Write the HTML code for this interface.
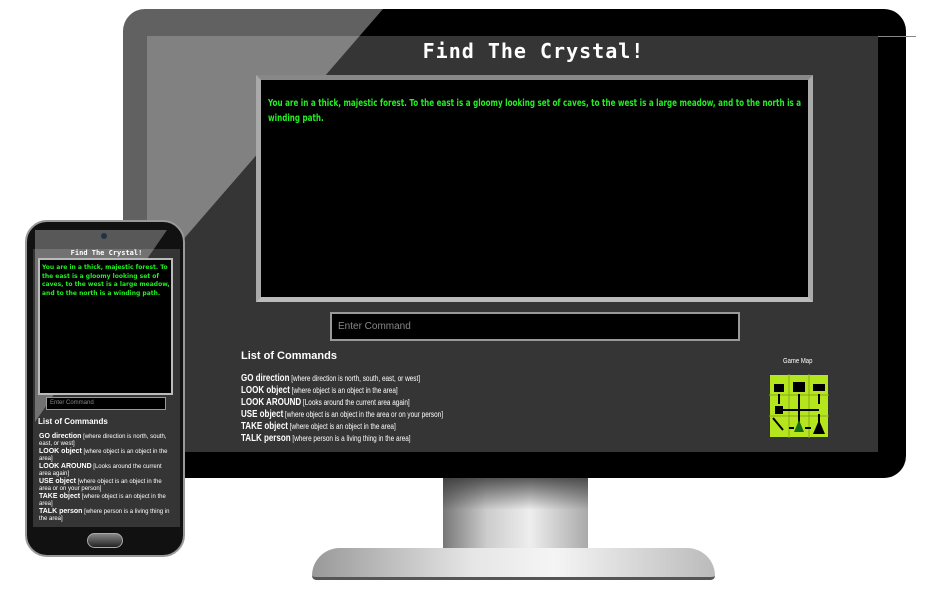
<!DOCTYPE html>
<html><head><style>
body{margin:0;width:930px;height:590px;background:#fff;position:relative;overflow:hidden;font-family:"Liberation Sans",sans-serif}
.a{position:absolute}
.mono{font-family:"DejaVu Sans Mono","Liberation Mono",monospace;font-weight:bold;color:#fff}
.g{color:#22ee22;font-weight:bold;font-family:"DejaVu Sans",sans-serif;transform-origin:0 0}
.cmd{color:#fff;font-size:8px;line-height:12px;transform:scaleX(0.8);transform-origin:0 0;white-space:nowrap}
.cmd b{font-size:10px}
</style></head><body>
<!-- stand -->
<div class="a" style="left:443px;top:470px;width:145px;height:82px;background:linear-gradient(90deg,#777,#ccc 30%,#eee 60%,#aaa);"></div>
<div class="a" style="left:443px;top:470px;width:145px;height:40px;background:linear-gradient(#333,rgba(0,0,0,0))"></div>
<div class="a" style="left:312px;top:548px;width:403px;height:32px;border-radius:40px 40px 6px 6px;background:linear-gradient(90deg,#999,#e6e6e6 40%,#f5f5f5 60%,#bbb);border-bottom:3px solid #555;box-sizing:border-box"></div>
<!-- monitor -->
<div class="a" style="left:123px;top:9px;width:783px;height:469px;background:#000;border-radius:22px"></div>
<div class="a" style="left:147px;top:36px;width:731px;height:416px;background:#353535"></div>
<div class="a" style="left:878px;top:36px;width:38px;height:1px;background:#888"></div>
<svg class="a" style="left:123px;top:9px" width="783" height="469"><polygon points="0,0 260,0 0,300" fill="rgba(255,255,255,0.38)"/></svg>
<div class="a mono" style="left:168px;width:731px;top:39px;text-align:center;font-size:20px;letter-spacing:1px">Find The Crystal!</div>
<div class="a" style="left:256px;top:75px;width:557px;height:227px;background:#000;border:5px solid #aaa;border-top-color:#888;border-bottom-color:#bbb;box-sizing:border-box"></div>
<div class="a g" style="left:268px;top:96px;width:715px;font-size:9.5px;line-height:15px;transform:scaleX(0.755)">You are in a thick, majestic forest. To the east is a gloomy looking set of caves, to the west is a large meadow, and to the north is a winding path.</div>
<div class="a" style="left:330px;top:312px;width:410px;height:29px;background:#000;border:2px solid #999;box-sizing:border-box;color:#888;font-size:10px;padding:7px 6px">Enter Command</div>
<div class="a" style="left:241px;top:350px;color:#fff;font-weight:bold;font-size:11px">List of Commands</div>
<div class="a cmd" style="left:241px;top:373px">
<div><b>GO direction</b> [where direction is north, south, east, or west]</div>
<div><b>LOOK object</b> [where object is an object in the area]</div>
<div><b>LOOK AROUND</b> [Looks around the current area again]</div>
<div><b>USE object</b> [where object is an object in the area or on your person]</div>
<div><b>TAKE object</b> [where object is an object in the area]</div>
<div><b>TALK person</b> [where person is a living thing in the area]</div>
</div>
<div class="a" style="left:783px;top:358px;color:#fff;font-size:7px;transform:scaleX(0.85);transform-origin:0 0">Game Map</div>
<svg class="a" style="left:769px;top:374px" width="60" height="64">
<rect width="60" height="64" fill="#b5e61d" stroke="#333" stroke-width="2"/>
<path d="M20 0V64M40 0V64M0 21H60M0 42H60" stroke="#8aa818" stroke-width="1"/>
<g stroke="#000" stroke-width="2" fill="none"><path d="M10 20V30M30 20V50M50 20V30M14 36H50M50 40V52M20 54H25M36 54H42"/></g>
<g fill="#000"><rect x="5" y="10" width="10" height="8"/><rect x="24" y="8" width="12" height="10"/><rect x="44" y="10" width="12" height="7"/><rect x="6" y="32" width="8" height="8"/><polygon points="44,60 50,46 56,60"/><path d="M4 44l10 12" stroke="#000" stroke-width="2"/></g>
<polygon points="30,46 25,58 35,58" fill="#176b12"/>
</svg>
<!-- phone -->
<div class="a" style="left:25px;top:220px;width:160px;height:337px;background:#111;border-radius:22px;border:2px solid #999;box-sizing:border-box"></div>
<div class="a" style="left:33px;top:249px;width:147px;height:278px;background:#353535"></div>
<svg class="a" style="left:27px;top:222px" width="156" height="333"><polygon points="8,8 140,8 8,200" fill="rgba(255,255,255,0.3)"/></svg>
<div class="a" style="left:101px;top:233px;width:6px;height:6px;border-radius:50%;background:#234"></div>
<div class="a" style="left:87px;top:533px;width:36px;height:15px;border-radius:8px;background:linear-gradient(#888,#222);border:1px solid #aaa;box-sizing:border-box"></div>
<div class="a mono" style="left:33px;width:147px;top:249px;text-align:center;font-size:7px">Find The Crystal!</div>
<div class="a" style="left:38px;top:258px;width:135px;height:137px;background:#000;border:2px solid #bbb;box-sizing:border-box"></div>
<div class="a g" style="left:42px;top:264px;width:128px;font-size:6px;line-height:8.5px">You are in a thick, majestic forest. To the east is a gloomy looking set of caves, to the west is a large meadow, and to the north is a winding path.</div>
<div class="a" style="left:46px;top:397px;width:120px;height:13px;background:#000;border:1px solid #999;box-sizing:border-box;color:#888;font-size:6px;padding:2px 3px">Enter Command</div>
<div class="a" style="left:38px;top:417px;color:#fff;font-weight:bold;font-size:8px">List of Commands</div>
<div class="a" style="left:39px;top:434px;width:132px;color:#fff;font-size:6px;line-height:6.5px">
<div style="margin-bottom:2px"><b style="font-size:7px">GO direction</b> [where direction is north, south, east, or west]</div>
<div style="margin-bottom:2px"><b style="font-size:7px">LOOK object</b> [where object is an object in the area]</div>
<div style="margin-bottom:2px"><b style="font-size:7px">LOOK AROUND</b> [Looks around the current area again]</div>
<div style="margin-bottom:2px"><b style="font-size:7px">USE object</b> [where object is an object in the area or on your person]</div>
<div style="margin-bottom:2px"><b style="font-size:7px">TAKE object</b> [where object is an object in the area]</div>
<div><b style="font-size:7px">TALK person</b> [where person is a living thing in the area]</div>
</div>
</body></html>
